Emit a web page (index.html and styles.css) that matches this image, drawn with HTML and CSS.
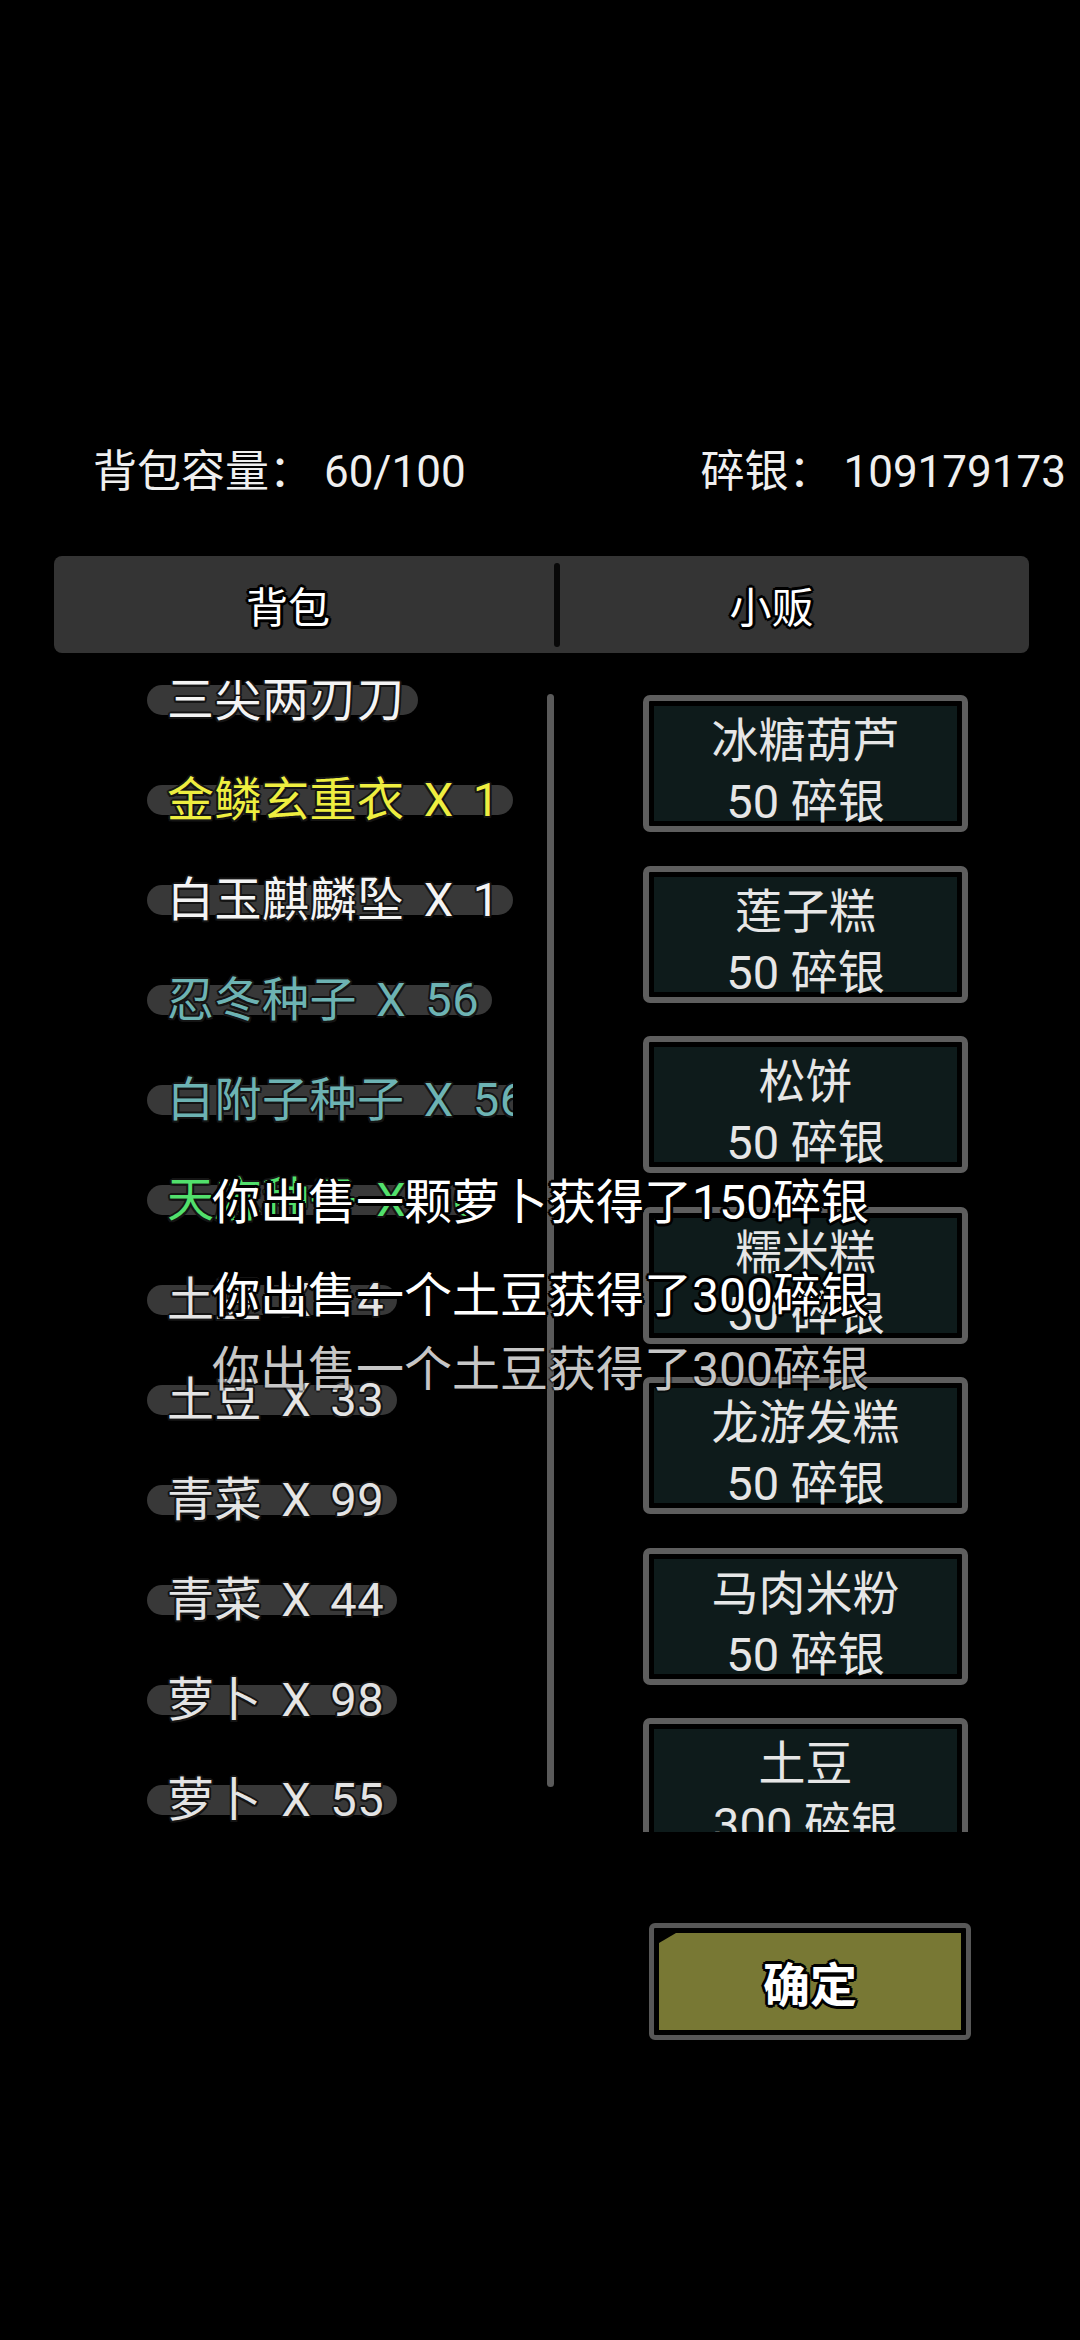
FILE: index.html
```html
<!DOCTYPE html>
<html lang="zh-CN">
<head>
<meta charset="utf-8">
<title>背包 / 小贩</title>
<link rel="stylesheet" href="styles.css">
</head>
<body>
<div class="screen">
  <div class="stats">
    <span class="stat">背包容量： 60/100</span>
    <span class="stat">碎银： 109179173</span>
  </div>

  <div class="tabs">
    <div class="tab tab-bag">背包</div>
    <div class="tab-divider"></div>
    <div class="tab tab-shop">小贩</div>
  </div>

  <div class="content">
    <div class="bag-view">
      <ul class="bag-list">
        <li class="bag-row"><span class="item c-white">三尖两刃刀</span></li>
        <li class="bag-row"><span class="item c-yellow">金鳞玄重衣 X 1</span></li>
        <li class="bag-row"><span class="item c-white">白玉麒麟坠 X 1</span></li>
        <li class="bag-row"><span class="item c-teal">忍冬种子 X 56</span></li>
        <li class="bag-row"><span class="item c-teal">白附子种子 X 56</span></li>
        <li class="bag-row"><span class="item c-green">天麻种子 X 56</span></li>
        <li class="bag-row"><span class="item c-grey">土豆 X 14</span></li>
        <li class="bag-row"><span class="item c-grey">土豆 X 33</span></li>
        <li class="bag-row"><span class="item c-grey">青菜 X 99</span></li>
        <li class="bag-row"><span class="item c-grey">青菜 X 44</span></li>
        <li class="bag-row"><span class="item c-grey">萝卜 X 98</span></li>
        <li class="bag-row"><span class="item c-grey">萝卜 X 55</span></li>
      </ul>
    </div>
    <div class="scrollbar"></div>
    <div class="shop-view">
      <div class="shop-list">
        <div class="card"><div class="card-inner"><div>冰糖葫芦</div><div>50 碎银</div></div></div>
        <div class="card"><div class="card-inner"><div>莲子糕</div><div>50 碎银</div></div></div>
        <div class="card"><div class="card-inner"><div>松饼</div><div>50 碎银</div></div></div>
        <div class="card"><div class="card-inner"><div>糯米糕</div><div>50 碎银</div></div></div>
        <div class="card"><div class="card-inner"><div>龙游发糕</div><div>50 碎银</div></div></div>
        <div class="card"><div class="card-inner"><div>马肉米粉</div><div>50 碎银</div></div></div>
        <div class="card"><div class="card-inner"><div>土豆</div><div>300 碎银</div></div></div>
      </div>
    </div>
  </div>

  <div class="actions">
    <button class="confirm"><span class="confirm-fill"><span class="confirm-label">确定</span></span></button>
  </div>

  <div class="toasts">
    <div class="toast t1">你出售一颗萝卜获得了150碎银</div>
    <div class="toast t2">你出售一个土豆获得了300碎银</div>
    <div class="toast t3 fading">你出售一个土豆获得了300碎银</div>
  </div>
</div>
</body>
</html>
```

FILE: styles.css
```css
html, body {
  margin: 0;
  padding: 0;
  background: #000;
}

body {
  font-family: Roboto, "Noto Sans CJK SC", sans-serif;
  color: #f0f0f0;
}

.screen {
  position: relative;
  width: 1080px;
  height: 2340px;
  overflow: hidden;
  background: #000;
}

/* header stats */
.stats {
  display: flex;
  justify-content: space-between;
  margin-top: 442px;
  height: 60px;
  line-height: 60px;
  padding: 0 14px 0 93px;
  font-size: 44px;
  color: #efefef;
  white-space: nowrap;
}

/* tabs */
.tabs {
  display: flex;
  align-items: center;
  margin: 54px 0 0 54px;
  width: 975px;
  height: 97px;
  background: #343434;
  border-radius: 8px;
}

.tab {
  box-sizing: border-box;
  height: 100%;
  display: flex;
  align-items: center;
  justify-content: center;
  font-size: 42px;
  color: #fff;
  text-shadow:
    3px 0 0 #000, -3px 0 0 #000, 0 3px 0 #000, 0 -3px 0 #000,
    2px 2px 0 #000, -2px 2px 0 #000, 2px -2px 0 #000, -2px -2px 0 #000;
}

.tab-bag {
  width: 500px;
  padding-right: 32px;
}

.tab-divider {
  width: 6px;
  height: 84px;
  background: #080808;
  border-radius: 3px;
}

.tab-shop {
  flex: 1;
  padding-right: 46px;
}

/* content */
.content {
  display: flex;
  margin-top: 27px;
  height: 1152px;
}

.bag-view {
  margin-left: 147px;
  width: 366px;
  height: 100%;
  overflow: hidden;
}

.bag-list {
  list-style: none;
  margin: -30px 0 0 0;
  padding: 0;
}

.bag-row {
  height: 100px;
  display: flex;
  align-items: center;
}

.item {
  display: inline-block;
  height: 30px;
  line-height: 30px;
  padding: 0 13px 0 20px;
  border-radius: 15px;
  background: #383838;
  font-size: 47px;
  word-spacing: 7px;
  letter-spacing: 0.5px;
  white-space: nowrap;
  text-shadow:
    2px 0 0 #141414, -2px 0 0 #141414, 0 2px 0 #141414, 0 -2px 0 #141414,
    1.5px 1.5px 0 #141414, -1.5px 1.5px 0 #141414, 1.5px -1.5px 0 #141414, -1.5px -1.5px 0 #141414;
}

.c-white { color: #f4f4f4; }
.c-yellow { color: #eeee40; }
.c-teal { color: #6db3b3; }
.c-green { color: #52e06c; }
.c-grey { color: #e4e4e4; }

.scrollbar {
  margin-left: 34px;
  margin-top: 14px;
  width: 7px;
  height: 1093px;
  background: #5a5a5a;
  border-radius: 4px;
}

.shop-view {
  margin-left: 89px;
  width: 325px;
  height: 100%;
  overflow: hidden;
}

.shop-list {
  padding-top: 15px;
}

.card {
  box-sizing: border-box;
  height: 137px;
  margin-bottom: 33.5px;
  border: 6px solid #5e5e5e;
  border-radius: 7px;
  padding: 5px;
  background: #000;
}

.card-inner {
  box-sizing: border-box;
  height: 100%;
  padding-top: 4px;
  background: #0e1b1b;
  text-align: center;
  font-size: 47px;
  line-height: 61px;
  color: #e6e6e6;
  white-space: nowrap;
}

/* confirm */
.actions {
  margin-top: 91px;
  padding-left: 649px;
}

.confirm {
  display: block;
  box-sizing: border-box;
  width: 322px;
  height: 117px;
  margin: 0;
  padding: 5px;
  border: 5px solid #575757;
  border-radius: 6px;
  background: #000;
  font-family: inherit;
}

.confirm-fill {
  display: flex;
  align-items: center;
  justify-content: center;
  width: 100%;
  height: 100%;
  background: #787834;
  clip-path: polygon(17px 0, 100% 0, 100% 100%, 0 100%, 0 10px);
}

.confirm-label {
  font-size: 47px;
  font-weight: 700;
  color: #fff;
  text-shadow:
    3px 0 0 #000, -3px 0 0 #000, 0 3px 0 #000, 0 -3px 0 #000,
    2px 2px 0 #000, -2px 2px 0 #000, 2px -2px 0 #000, -2px -2px 0 #000;
}

/* toasts overlay */
.toasts {
  position: absolute;
  left: 212px;
  top: 1173px;
}

.toast {
  height: 60px;
  line-height: 60px;
  font-size: 48px;
  color: #fff;
  white-space: nowrap;
  text-shadow:
    3px 0 0 #000, -3px 0 0 #000, 0 3px 0 #000, 0 -3px 0 #000,
    2px 2px 0 #000, -2px 2px 0 #000, 2px -2px 0 #000, -2px -2px 0 #000;
}

.t2 { margin-top: 33px; }
.t3 { margin-top: 14px; }

.fading {
  color: rgba(235, 235, 235, 0.85);
  text-shadow:
    2px 0 0 rgba(0,0,0,0.5), -2px 0 0 rgba(0,0,0,0.5), 0 2px 0 rgba(0,0,0,0.5), 0 -2px 0 rgba(0,0,0,0.5);
}
```
